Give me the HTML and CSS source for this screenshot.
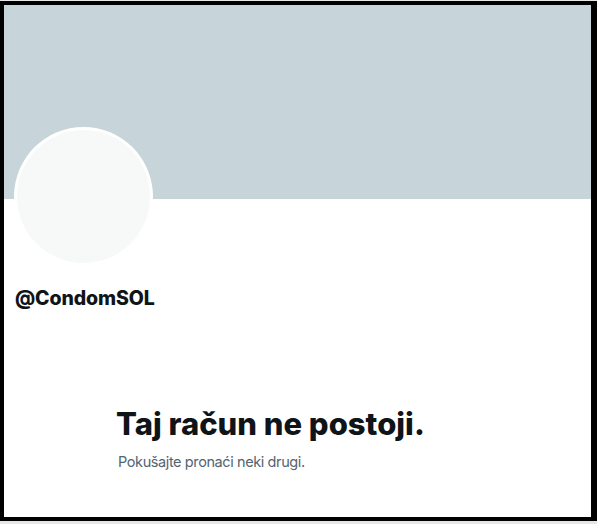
FILE: index.html
```html
<!DOCTYPE html>
<html lang="hr">
<head>
<meta charset="utf-8">
<link rel="stylesheet" href="styles.css">
</head>
<body>
<div class="page">
  <div class="frame">
    <div class="banner"></div>
    <div class="avatar"><div class="avatar-fill"></div></div>
    <div class="handle">@CondomSOL</div>
    <div class="empty">
      <h1 class="title">Taj račun ne postoji.</h1>
      <p class="sub">Pokušajte pronaći neki drugi.</p>
    </div>
  </div>
</div>
</body>
</html>
```
FILE: styles.css
```css
html, body {
  margin: 0;
  padding: 0;
  background: #e4e6e7;
}
.page {
  width: 597px;
  height: 524px;
  padding-top: 1px;
  box-sizing: border-box;
}
.frame {
  width: 597px;
  height: 520px;
  box-sizing: border-box;
  border-style: solid;
  border-color: #000;
  border-width: 4px 6px 4px 4px;
  background: #fff;
  display: flex;
  flex-direction: column;
  font-family: Inter, "Noto Sans", sans-serif;
  overflow: hidden;
}
.banner {
  height: 194px;
  background: #c7d4da;
  flex: none;
}
.avatar {
  width: 139px;
  height: 139px;
  margin: -72px 0 0 10px;
  border-radius: 50%;
  background: #fff;
  padding: 3px;
  box-sizing: border-box;
  flex: none;
}
.avatar-fill {
  width: 100%;
  height: 100%;
  border-radius: 50%;
  background: #f7f9f9;
}
.handle {
  margin: 20px 0 0 11px;
  font-size: 19.5px;
  font-weight: 800;
  color: #0f1419;
  line-height: 24px;
  letter-spacing: -0.1px;
}
.empty {
  margin: 96px 0 0 112px;
}
.title {
  margin: 0;
  font-size: 31px;
  font-weight: 800;
  color: #0f1419;
  line-height: 36px;
  letter-spacing: 0;
}
.sub {
  margin: 10px 0 0 2px;
  font-size: 14.5px;
  color: #536471;
  line-height: 20px;
  letter-spacing: -0.4px;
}
```
